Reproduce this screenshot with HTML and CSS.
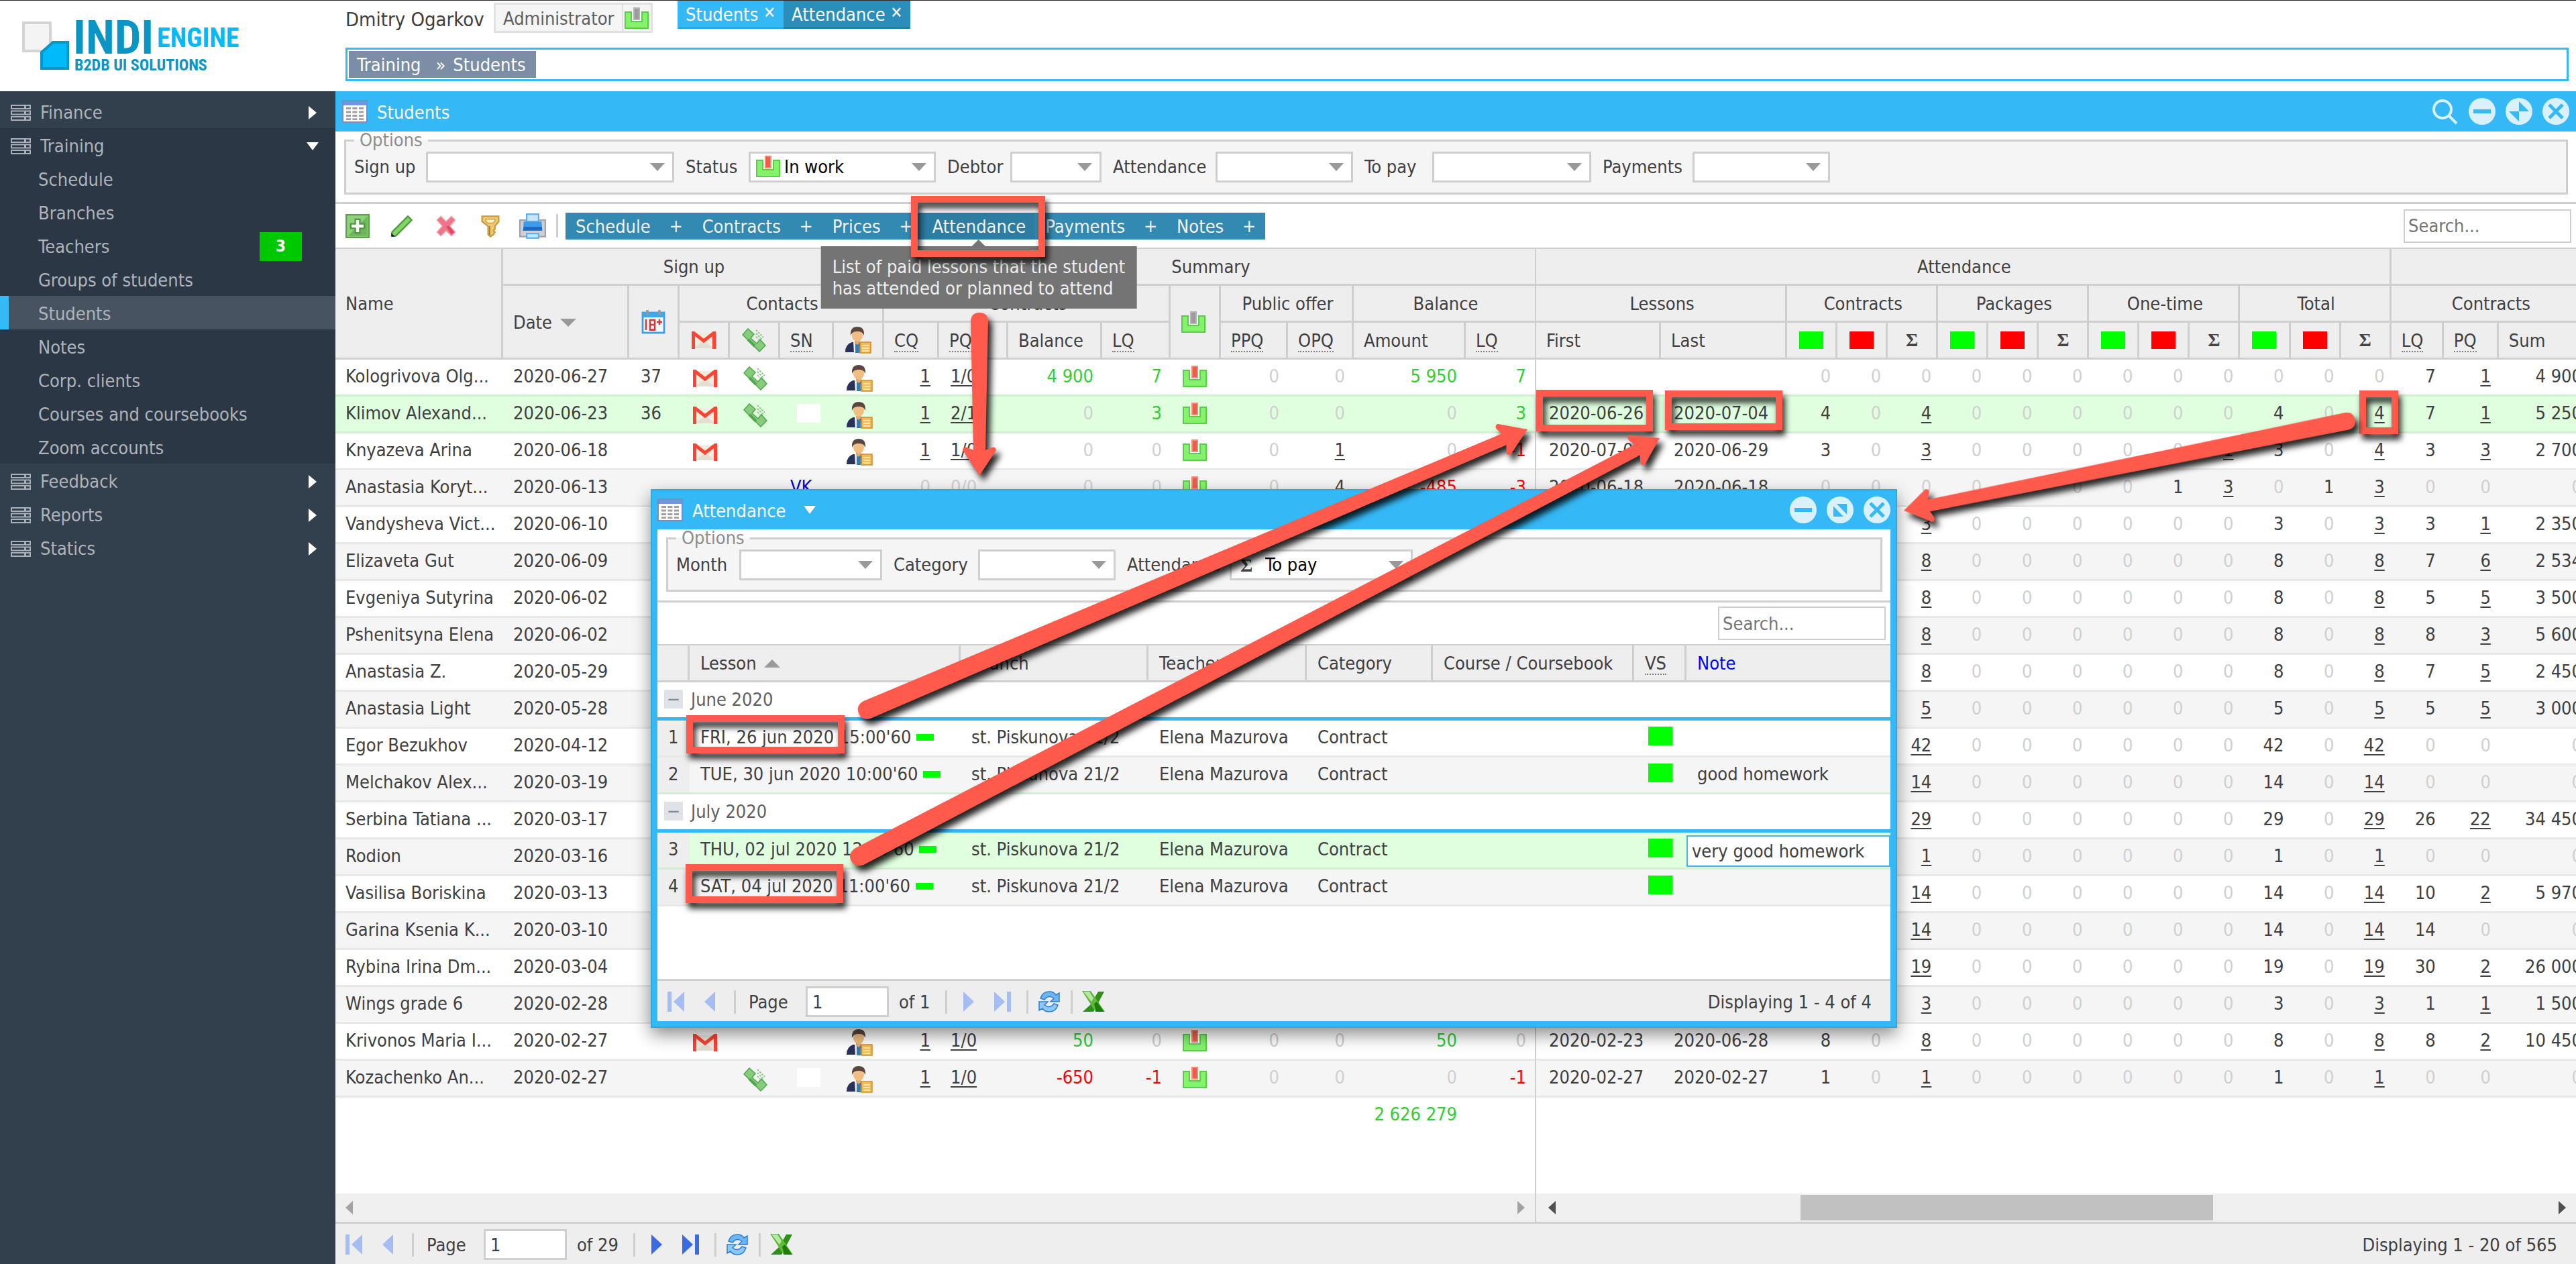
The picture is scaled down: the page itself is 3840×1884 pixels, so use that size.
FILE: index.html
```html
<!DOCTYPE html>
<html lang="en">
<head>
<meta charset="utf-8">
<title>Students - Indi Engine</title>
<link rel="stylesheet" href="styles.css">
</head>
<body>
<svg class="sprite" aria-hidden="true">
  <symbol id="i-status" viewBox="0 0 18 16"><path d="M.5 3.500h4.500v7h8v-7h4.500v12H.5z" fill="#86f26c" stroke="#58cf48"/><path d="M5.500 3.500h7v6.500h-7z" fill="#fff"/><rect x="7" y=".5" width="4" height="8.500" fill="#9b9b9b" stroke="#b5b5b5"/></symbol>
  <symbol id="i-work" viewBox="0 0 18 16"><path d="M.5 3.500h4.500v7h8v-7h4.500v12H.5z" fill="#86f26c" stroke="#58cf48"/><path d="M5.500 3.500h7v6.500h-7z" fill="#fff"/><rect x="7" y=".5" width="4" height="8.500" fill="#e8604c" stroke="#f28c78"/></symbol>
  <symbol id="i-stack" viewBox="0 0 30 24"><g fill="none" stroke="#a9b0b7" stroke-width="2"><rect x="1" y="1" width="28" height="5"/><rect x="1" y="9.500" width="28" height="5"/><rect x="1" y="18" width="28" height="5"/></g><g fill="#a9b0b7"><rect x="20" y="1" width="3" height="5"/><rect x="20" y="10" width="3" height="5"/><rect x="20" y="18" width="3" height="5"/></g></symbol>
  <symbol id="i-grid" viewBox="0 0 19 17"><rect x=".5" y=".5" width="18" height="16" fill="#fff" stroke="#7290c8"/><rect x="1" y="1" width="17" height="3" fill="#6f97dc"/><g fill="#a0a0a0"><path d="M3 5.500h3.500v1.500H3zM7.700 5.500h3.500v1.500H7.700zM12.500 5.500H16v1.500h-3.500zM3 8.200h3.500v1.500H3zM7.700 8.200h3.500v1.500H7.700zM12.500 8.200H16v1.500h-3.500zM3 11h3.500v1.500H3zM7.700 11h3.500v1.500H7.700zM12.500 11H16v1.500h-3.500zM3 13.600h3.500v1.400H3zM7.700 13.600h3.500v1.400H7.700zM12.500 13.600H16v1.400h-3.500z"/></g></symbol>
  <symbol id="i-search" viewBox="0 0 40 40"><circle cx="16" cy="17" r="13" fill="none" stroke="#d8f1fd" stroke-width="4"/><path d="M25 26l12 12" stroke="#d8f1fd" stroke-width="4"/></symbol>
  <symbol id="i-min" viewBox="0 0 40 40"><circle cx="20" cy="20" r="20" fill="#d8f1fd"/><path d="M7 20h26" stroke="#36b9f6" stroke-width="6"/></symbol>
  <symbol id="i-max" viewBox="0 0 40 40"><circle cx="20" cy="20" r="20" fill="#d8f1fd"/><path d="M20 5v30L5 20h30z" fill="#36b9f6"/></symbol>
  <symbol id="i-restore" viewBox="0 0 40 40"><circle cx="20" cy="20" r="20" fill="#d8f1fd"/><path d="M10 11h20v19H10z" fill="#36b9f6"/><path d="M9 9l22 23" stroke="#d8f1fd" stroke-width="6"/></symbol>
  <symbol id="i-close" viewBox="0 0 40 40"><circle cx="20" cy="20" r="20" fill="#d8f1fd"/><path d="M10 10l20 20M30 10L10 30" stroke="#36b9f6" stroke-width="5"/></symbol>
  <symbol id="i-add" viewBox="0 0 16 16"><rect x=".5" y=".5" width="15" height="15" fill="#8fd07c" stroke="#5fa04b"/><path d="M1.500 14.500l13-13v13z" fill="#6fb55c"/><path d="M6.500 3.500h3v3h3v3h-3v3h-3v-3h-3v-3h3z" fill="#fff" stroke="#4d9a3d"/></symbol>
  <symbol id="i-pencil" viewBox="0 0 16 16"><path d="M1.500 12L12 1.500l2.500 2.500L4 14.500H1.500z" fill="#82d667" stroke="#4b9a3c"/><path d="M1 12.500L3.500 15H1z" fill="#123"/></symbol>
  <symbol id="i-del" viewBox="0 0 16 16"><path d="M2 4l2.500-2.500L8 5l3.500-3.500L14 4l-3.500 4L14 12l-2.500 2.500L8 11l-3.500 3.500L2 12l3.500-4z" fill="#ee7488" stroke="#f4a0ae" stroke-width=".7"/><path d="M8 8l3.500 5.500L13.500 12l-3.500-4z" fill="#e04864"/></symbol>
  <symbol id="i-key" viewBox="0 0 16 16"><path d="M2.500 1.500h11v3.500l-2.500 3v2l-1 1 1 1-1 1.500-2 1.500-1.500-1.500V8l-4-3z" fill="#edc974" stroke="#c99a3f"/><path d="M5 3.500h6v1.500l-1.500 1H6.500L5 5z" fill="#fff4c9" stroke="#c99a3f" stroke-width=".6"/><path d="M7.500 8v6" stroke="#a87828" stroke-width=".8"/></symbol>
  <symbol id="i-print" viewBox="0 0 18 17"><path d="M.5 4.500h17v11H.5z" fill="#cfcfd6" stroke="#a3a3ad"/><rect x="5" y=".5" width="8" height="5" fill="#c9e4ff" stroke="#5cb0f5"/><path d="M3 5.500h12l.5 6h-13z" fill="#3f9be8"/><path d="M3 9h12.300v2.500H2.500z" fill="#1d6cc4"/><rect x="5" y="13.500" width="8" height="3" fill="#c9e4ff" stroke="#5cb0f5"/></symbol>
  <symbol id="i-cal" viewBox="0 0 18 18"><rect x="1" y="2" width="16" height="15" fill="#f4fbfd" stroke="#3f9fe4" stroke-width="1.400"/><path d="M1 2h16v3.500H1z" fill="#3ea8ee"/><path d="M4.500 0v4M13.500 0v4" stroke="#999" stroke-width="1.800"/><path d="M3.500 7v8M6.500 7.500h3.500v7.300H6.500zM6.500 11h3.500M11.500 9h4M13.500 7v4" fill="none" stroke="#d23b3b" stroke-width="1.300"/></symbol>
  <symbol id="i-mail" viewBox="0 0 36 26"><path d="M3 2h30v23H3z" fill="#efece0"/><path d="M3 25l15-11 15 11z" fill="#e2ded2"/><path d="M2.500 26V2L18 14 33.500 2v24" fill="none" stroke="#fb4433" stroke-width="5"/></symbol>
  <symbol id="i-phone" viewBox="0 0 36 36"><path d="M1 10l8-9 9 8-5 6 9 8 5-6 8 9-9 9z" fill="#86cb7e" stroke="#4da94b" stroke-width="1.500"/><path d="M9 17l10 10" stroke="#4da94b" stroke-width="4"/><path d="M21 3l11 11M21 8l9 9M21 13l4 4" fill="none" stroke="#8fc98a" stroke-width="2" stroke-dasharray="3 1.500"/></symbol>
  <symbol id="i-man" viewBox="0 0 40 40"><path d="M1 38q0-12 10-15h9q6 1 8 6v9z" fill="#29305a"/><path d="M13 22h8l1 17h-8z" fill="#eef3f8"/><path d="M16 24h5l1 15h-6z" fill="#2f7fb5"/><path d="M15 16h8v8l-4 3-4-3z" fill="#e0a86c"/><ellipse cx="19" cy="13" rx="8" ry="9" fill="#f0bd83"/><path d="M9 13Q8 0 19 0t10 13q-3-7-10-6Q12 6 9 13z" fill="#59463f"/><rect x="23" y="23" width="16" height="16" fill="#f6ba55" stroke="#d08d2c" stroke-width="1.500"/><path d="M26 28h10M26 32h10M26 36h10" stroke="#fde7ae" stroke-width="2"/></symbol>
  <symbol id="i-first" viewBox="0 0 28 32"><rect x="1" y="1" width="6" height="30"/><path d="M26 1v30L10 16z"/></symbol>
  <symbol id="i-prev" viewBox="0 0 28 32"><path d="M22 1v30L6 16z"/></symbol>
  <symbol id="i-next" viewBox="0 0 28 32"><path d="M6 1v30l16-15z"/></symbol>
  <symbol id="i-last" viewBox="0 0 28 32"><rect x="21" y="1" width="6" height="30"/><path d="M2 1v30l16-15z"/></symbol>
  <symbol id="i-refresh" viewBox="0 0 36 36"><path d="M5 13Q8 3 18 3q7 0 10 5l5-3v13H20l5-5q-8-6-14 2z" fill="#6db5f2" stroke="#2d7fd1" stroke-width="1.500"/><path d="M31 23q-3 10-13 10-7 0-10-5l-5 3V18h13l-5 5q8 6 14-2z" fill="#8cc8f7" stroke="#2d7fd1" stroke-width="1.500"/></symbol>
  <symbol id="i-excel" viewBox="0 0 36 36"><path d="M14 22L25 3h9L18 33H2z" fill="#2f8f16"/><path d="M1 2h13l21 31H21z" fill="#5dbb3c"/><path d="M3 3h9l6 10-3 5z" fill="#b6e8a2"/><path d="M19 21l4-3 11 15H22z" fill="#1f7c0c"/></symbol>
</svg>

<header class="top">
  <a class="logo" href="#" aria-label="Indi Engine">
    <svg width="340" height="100" viewBox="0 0 340 100">
      <path d="M2 16h40v42H2z" fill="#f4f4f4" stroke="#d4d4d4" stroke-width="4"/>
      <path d="M46 45h22v39H29V60z" fill="#00baf9" stroke="#0497c8" stroke-width="4"/>
      <text class="logo-big" x="76" y="62">INDI</text>
      <text class="logo-mid" x="201" y="52">ENGINE</text>
      <text class="logo-sub" x="78" y="87">B2DB UI SOLUTIONS</text>
    </svg>
  </a>
  <div class="top-main">
    <div class="user-row">
      <span class="user">Dmitry Ogarkov</span>
      <span class="role"><span class="role-name">Administrator</span><svg class="tray"><use href="#i-status"/></svg></span>
      <nav class="tabs">
        <button class="tab on">Students <span class="x">✕</span></button><button class="tab">Attendance <span class="x">✕</span></button>
      </nav>
    </div>
    <div class="crumbs"><div class="crumb-chip"><a href="#">Training</a><span>»</span><a href="#">Students</a></div></div>
  </div>
</header>

<div class="shell">
  <nav class="side">
    <a class="root" href="#"><svg class="stack"><use href="#i-stack"/></svg>Finance<i class="tri-r"></i></a>
    <div class="open">
      <a class="root" href="#"><svg class="stack"><use href="#i-stack"/></svg>Training<i class="tri-d"></i></a>
      <a class="leaf" href="#">Schedule</a>
      <a class="leaf" href="#">Branches</a>
      <a class="leaf" href="#">Teachers<b class="count">3</b></a>
      <a class="leaf" href="#">Groups of students</a>
      <a class="leaf current" href="#">Students</a>
      <a class="leaf" href="#">Notes</a>
      <a class="leaf" href="#">Corp. clients</a>
      <a class="leaf" href="#">Courses and coursebooks</a>
      <a class="leaf" href="#">Zoom accounts</a>
    </div>
    <a class="root" href="#"><svg class="stack"><use href="#i-stack"/></svg>Feedback<i class="tri-r"></i></a>
    <a class="root" href="#"><svg class="stack"><use href="#i-stack"/></svg>Reports<i class="tri-r"></i></a>
    <a class="root" href="#"><svg class="stack"><use href="#i-stack"/></svg>Statics<i class="tri-r"></i></a>
  </nav>

  <main class="panel">
    <div class="bar">
      <svg class="grid-ico"><use href="#i-grid"/></svg><h1>Students</h1>
      <div class="tools">
        <button aria-label="Search"><svg><use href="#i-search"/></svg></button>
        <button aria-label="Minimize"><svg><use href="#i-min"/></svg></button>
        <button aria-label="Maximize"><svg><use href="#i-max"/></svg></button>
        <button aria-label="Close"><svg><use href="#i-close"/></svg></button>
      </div>
    </div>
    <div class="filters">
      <fieldset>
        <legend>Options</legend>
        <div class="fields">
          <label for="f1" class="l-107">Sign up</label><select id="f1" class="w-370"><option></option></select>
          <label for="f2" class="l-94">Status</label><span class="pick"><svg class="tray"><use href="#i-work"/></svg><select id="f2" class="w-280"><option>In work</option></select></span>
          <label for="f3" class="l-94">Debtor</label><select id="f3" class="w-136"><option></option></select>
          <label for="f4" class="l-153">Attendance</label><select id="f4" class="w-204"><option></option></select>
          <label for="f5" class="l-101">To pay</label><select id="f5" class="w-237"><option></option></select>
          <label for="f6" class="l-134">Payments</label><select id="f6" class="w-204"><option></option></select>
        </div>
      </fieldset>
    </div>
    <div class="toolbar">
      <button class="act" aria-label="Create"><svg><use href="#i-add"/></svg></button>
      <button class="act" aria-label="Edit"><svg><use href="#i-pencil"/></svg></button>
      <button class="act" aria-label="Delete"><svg><use href="#i-del"/></svg></button>
      <button class="act" aria-label="Access"><svg><use href="#i-key"/></svg></button>
      <button class="act print" aria-label="Print"><svg><use href="#i-print"/></svg></button>
      <i class="sep"></i>
      <div class="subs">
        <button>Schedule</button><button class="plus">+</button><button>Contracts</button><button class="plus">+</button><button>Prices</button><button class="plus">+</button><span class="hint"><button class="hot" aria-describedby="tip">Attendance</button><span class="tip" id="tip" role="tooltip">List of paid lessons that the student<br>has attended or planned to attend</span></span><button>Payments</button><button class="plus">+</button><button>Notes</button><button class="plus">+</button>
      </div>
      <input class="find" type="text" placeholder="Search..." aria-label="Search">
    </div>

    <div class="grids">
      <div class="locked">
        <table class="grid">
          <colgroup><col class="c250"><col class="c188"><col class="c75"><col class="c75"><col class="c75"><col class="c80"><col class="c75"><col class="c82"><col class="c103"><col class="c140"><col class="c102"><col class="c75"><col class="c100"><col class="c98"><col class="c167"><col class="c103"></colgroup>
          <thead>
            <tr><th rowspan="3">Name</th><th colspan="6" class="mid">Sign up</th><th colspan="9" class="mid">Summary</th></tr>
            <tr><th rowspan="2">Date <i class="sort-d"></i></th><th rowspan="2" class="mid"><svg class="ico"><use href="#i-cal"/></svg></th><th colspan="4" class="mid">Contacts</th><th colspan="4" class="mid">Contracts</th><th rowspan="2" class="mid"><svg class="tray"><use href="#i-status"/></svg></th><th colspan="2" class="mid">Public offer</th><th colspan="2" class="mid">Balance</th></tr>
            <tr><th class="mid"><svg class="mail"><use href="#i-mail"/></svg></th><th class="mid"><svg class="ico"><use href="#i-phone"/></svg></th><th><abbr>SN</abbr></th><th class="mid"><svg class="man"><use href="#i-man"/></svg></th><th><abbr>CQ</abbr></th><th><abbr>PQ</abbr></th><th>Balance</th><th><abbr>LQ</abbr></th><th><abbr>PPQ</abbr></th><th><abbr>OPQ</abbr></th><th>Amount</th><th><abbr>LQ</abbr></th></tr>
          </thead>
          <tbody id="left"></tbody>
        </table>
        <div class="scroll off"><i class="al"></i><i class="ar"></i></div>
      </div>
      <div class="free">
        <div class="clip">
        <table class="grid wide">
          <colgroup><col class="c186"><col class="c188"><col class="c75" span="12"><col class="c78"><col class="c82"><col class="c136"></colgroup>
          <thead>
            <tr><th colspan="14" class="mid">Attendance</th><th colspan="3"></th></tr>
            <tr><th colspan="2" class="mid">Lessons</th><th colspan="3" class="mid">Contracts</th><th colspan="3" class="mid">Packages</th><th colspan="3" class="mid">One-time</th><th colspan="3" class="mid">Total</th><th colspan="3" class="mid">Contracts</th></tr>
            <tr><th>First</th><th>Last</th><th class="mid"><i class="sq g"></i></th><th class="mid"><i class="sq r"></i></th><th class="mid sum">Σ</th><th class="mid"><i class="sq g"></i></th><th class="mid"><i class="sq r"></i></th><th class="mid sum">Σ</th><th class="mid"><i class="sq g"></i></th><th class="mid"><i class="sq r"></i></th><th class="mid sum">Σ</th><th class="mid"><i class="sq g"></i></th><th class="mid"><i class="sq r"></i></th><th class="mid sum">Σ</th><th><abbr>LQ</abbr></th><th><abbr>PQ</abbr></th><th>Sum</th></tr>
          </thead>
          <tbody id="right"></tbody>
        </table>
        </div>
        <div class="scroll"><i class="al"></i><i class="thumb"></i><i class="ar"></i></div>
      </div>
    </div>

    <div class="pager">
      <button class="dim" aria-label="First page"><svg><use href="#i-first"/></svg></button>
      <button class="dim" aria-label="Previous page"><svg><use href="#i-prev"/></svg></button>
      <i class="sep"></i>
      <label for="pg">Page</label><input id="pg" type="text" value="1"><span>of 29</span>
      <i class="sep"></i>
      <button aria-label="Next page"><svg><use href="#i-next"/></svg></button>
      <button aria-label="Last page"><svg><use href="#i-last"/></svg></button>
      <i class="sep"></i>
      <button class="sq-btn" aria-label="Refresh"><svg><use href="#i-refresh"/></svg></button>
      <i class="sep"></i>
      <button class="sq-btn" aria-label="Export to Excel"><svg><use href="#i-excel"/></svg></button>
      <span class="total">Displaying 1 - 20 of 565</span>
    </div>
  </main>
</div>

<section class="win" aria-label="Attendance">
  <div class="bar">
    <svg class="grid-ico"><use href="#i-grid"/></svg><h2>Attendance</h2><i class="tri-d"></i>
    <div class="tools">
      <button aria-label="Minimize window"><svg><use href="#i-min"/></svg></button>
      <button aria-label="Restore window"><svg><use href="#i-restore"/></svg></button>
      <button aria-label="Close window"><svg><use href="#i-close"/></svg></button>
    </div>
  </div>
  <div class="filters">
    <fieldset>
      <legend>Options</legend>
      <div class="fields">
        <label for="w1" class="l-94">Month</label><select id="w1" class="w-213"><option></option></select>
        <label for="w2" class="l-126">Category</label><select id="w2" class="w-204"><option></option></select>
        <label for="w3" class="l-153">Attendance</label><span class="pick"><b class="sum">Σ</b><select id="w3" class="w-273"><option>To pay</option></select></span>
      </div>
    </fieldset>
  </div>
  <div class="toolbar"><input class="find" type="text" placeholder="Search..." aria-label="Search lessons"></div>
  <div class="win-body">
  <table class="grid lessons">
    <colgroup><col class="c48"><col class="c404"><col class="c280"><col class="c236"><col class="c188"><col class="c300"><col class="c78"><col></colgroup>
    <thead><tr><th></th><th>Lesson <i class="sort-u"></i></th><th>Branch</th><th>Teacher</th><th>Category</th><th>Course / Coursebook</th><th><abbr>VS</abbr></th><th class="blue">Note</th></tr></thead>
    <tbody>
      <tr class="group"><td colspan="8"><button class="fold" aria-label="Collapse June 2020">−</button>June 2020</td></tr>
      <tr><td class="n">1</td><td>FRI, 26 jun 2020 15:00'60 <i class="dash"></i></td><td>st. Piskunova 21/2</td><td>Elena Mazurova</td><td>Contract</td><td></td><td class="mid"><i class="sq g"></i></td><td></td></tr>
      <tr class="alt last"><td class="n">2</td><td>TUE, 30 jun 2020 10:00'60 <i class="dash"></i></td><td>st. Piskunova 21/2</td><td>Elena Mazurova</td><td>Contract</td><td></td><td class="mid"><i class="sq g"></i></td><td>good homework</td></tr>
      <tr class="group"><td colspan="8"><button class="fold" aria-label="Collapse July 2020">−</button>July 2020</td></tr>
      <tr class="sel"><td class="n">3</td><td>THU, 02 jul 2020 12:00'60 <i class="dash"></i></td><td>st. Piskunova 21/2</td><td>Elena Mazurova</td><td>Contract</td><td></td><td class="mid"><i class="sq g"></i></td><td class="edit"><input type="text" value="very good homework" aria-label="Note" autofocus></td></tr>
      <tr class="alt"><td class="n">4</td><td>SAT, 04 jul 2020 11:00'60 <i class="dash"></i></td><td>st. Piskunova 21/2</td><td>Elena Mazurova</td><td>Contract</td><td></td><td class="mid"><i class="sq g"></i></td><td></td></tr>
    </tbody>
  </table>
  </div>
  <div class="pager">
    <button class="dim" aria-label="First page of lessons"><svg><use href="#i-first"/></svg></button>
    <button class="dim" aria-label="Previous page of lessons"><svg><use href="#i-prev"/></svg></button>
    <i class="sep"></i>
    <label for="wpg">Page</label><input id="wpg" type="text" value="1"><span>of 1</span>
    <i class="sep"></i>
    <button class="dim" aria-label="Next page of lessons"><svg><use href="#i-next"/></svg></button>
    <button class="dim" aria-label="Last page of lessons"><svg><use href="#i-last"/></svg></button>
    <i class="sep"></i>
    <button class="sq-btn" aria-label="Refresh lessons"><svg><use href="#i-refresh"/></svg></button>
    <i class="sep"></i>
    <button class="sq-btn" aria-label="Export lessons to Excel"><svg><use href="#i-excel"/></svg></button>
    <span class="total">Displaying 1 - 4 of 4</span>
  </div>
</section>

<!-- callouts drawn over the page -->
<svg class="marks" width="3840" height="1884" viewBox="0 0 3840 1884" aria-hidden="true">
  <g class="frames">
    <rect x="1363" y="297" width="190" height="81"/>
    <rect x="2295" y="586" width="164" height="52"/>
    <rect x="2487" y="587" width="165" height="49"/>
    <rect x="3522" y="587" width="48" height="55"/>
    <rect x="1028" y="1071" width="226" height="47"/>
    <rect x="1027" y="1293" width="225" height="48"/>
  </g>
  <g class="arrows">
    <path transform="translate(1460 709) rotate(90)" d="M0 0L-38 25Q-44 24-42 18L-38 9L-231 13Q-243 12-243 0Q-243-12-231-13L-38-9L-42-18Q-44-24-38-25Z"/>
    <path transform="translate(2277 640) rotate(-23)" d="M0 0L-38 25Q-44 24-42 18L-38 9L-1070 14Q-1083 12-1083 0Q-1083-12-1070-14L-38-9L-42-18Q-44-24-38-25Z"/>
    <path transform="translate(2474 653) rotate(-27.600)" d="M0 0L-38 25Q-44 24-42 18L-38 9L-1346 14Q-1360 12-1360 0Q-1360-12-1346-14L-38-9L-42-18Q-44-24-38-25Z"/>
    <path transform="translate(2838 761) rotate(168.600)" d="M0 0L-38 25Q-44 24-42 18L-38 9L-674 13Q-686 12-686 0Q-686-12-674-13L-38-9L-42-18Q-44-24-38-25Z"/>
  </g>
</svg>
<script src="grid.js"></script>
</body>
</html>
```
FILE: grid.js
```js
// name | date | age | icons (m mail, p phone, w blank network, v VK, u manager) | locked numbers | first | last | scrolling numbers
const rows = [
  ["Kologrivova Olg...", "2020-06-27", "37", "mpu", "_1,_1/0,+4 900,+7,*,0,0,+5 950,+7", "", "", "0,0,0,0,0,0,0,0,0,0,0,0,7,_1,4 900"],
  ["Klimov Alexand...", "2020-06-23", "36", "mpwu", "_1,_2/1,0,+3,*,0,0,0,+3", "2020-06-26", "2020-07-04", "4,0,_4,0,0,0,0,0,0,4,0,_4,7,_1,5 250"],
  ["Knyazeva Arina", "2020-06-18", "", "mu", "_1,_1/0,0,0,*,0,_1,0,--1", "2020-07-02", "2020-06-29", "3,0,_3,0,0,0,0,0,_1,3,0,_4,3,_3,2 700"],
  ["Anastasia Koryt...", "2020-06-13", "", "v", "0,~0/0,0,0,*,0,4,--485,--3", "2020-06-18", "2020-06-18", "0,0,0,0,0,0,0,1,_3,0,1,_3,0,0,0"],
  ["Vandysheva Vict...", "2020-06-10", "", "", "", "", "", ",,_3,0,0,0,0,0,0,3,0,_3,3,_1,2 350"],
  ["Elizaveta Gut", "2020-06-09", "", "", "", "", "", ",,_8,0,0,0,0,0,0,8,0,_8,7,_6,2 534"],
  ["Evgeniya Sutyrina", "2020-06-02", "", "", "", "", "", ",,_8,0,0,0,0,0,0,8,0,_8,5,_5,3 500"],
  ["Pshenitsyna Elena", "2020-06-02", "", "", "", "", "", ",,_8,0,0,0,0,0,0,8,0,_8,8,_3,5 600"],
  ["Anastasia Z.", "2020-05-29", "", "", "", "", "", ",,_8,0,0,0,0,0,0,8,0,_8,7,_5,2 450"],
  ["Anastasia Light", "2020-05-28", "", "", "", "", "", ",,_5,0,0,0,0,0,0,5,0,_5,5,_5,3 000"],
  ["Egor Bezukhov", "2020-04-12", "", "", "", "", "", ",,_42,0,0,0,0,0,0,42,0,_42,0,0,0"],
  ["Melchakov Alex...", "2020-03-19", "", "", "", "", "", ",,_14,0,0,0,0,0,0,14,0,_14,0,0,0"],
  ["Serbina Tatiana ...", "2020-03-17", "", "", "", "", "", ",,_29,0,0,0,0,0,0,29,0,_29,26,_22,34 450"],
  ["Rodion", "2020-03-16", "", "", "", "", "", ",,_1,0,0,0,0,0,0,1,0,_1,0,0,0"],
  ["Vasilisa Boriskina", "2020-03-13", "", "", "", "", "", ",,_14,0,0,0,0,0,0,14,0,_14,10,_2,5 970"],
  ["Garina Ksenia K...", "2020-03-10", "", "", "", "", "", ",,_14,0,0,0,0,0,0,14,0,_14,14,0,0"],
  ["Rybina Irina Dm...", "2020-03-04", "", "", "", "", "", ",,_19,0,0,0,0,0,0,19,0,_19,30,_2,26 000"],
  ["Wings grade 6", "2020-02-28", "", "", "", "", "", ",,_3,0,0,0,0,0,0,3,0,_3,1,_1,1 500"],
  ["Krivonos Maria I...", "2020-02-27", "", "mu", "_1,_1/0,+50,0,*,0,0,+50,0", "2020-02-23", "2020-06-28", "8,0,_8,0,0,0,0,0,0,8,0,_8,8,_2,10 450"],
  ["Kozachenko An...", "2020-02-27", "", "pwu", "_1,_1/0,--650,--1,*,0,0,0,--1", "2020-02-27", "2020-02-27", "1,0,_1,0,0,0,0,0,0,1,0,_1,0,0,0"]
];

const icon = (id, cls) => `<svg class="${cls}"><use href="#i-${id}"/></svg>`;

// prefix of a value: _ link, + positive, - negative, ~ muted, * status icon
function cell(v) {
  if (v === "*") return `<td class="mid">${icon("work", "tray")}</td>`;
  if (v === "0") return '<td class="num zero">0</td>';
  const kind = { _: "link", "+": "pos", "-": "neg", "~": "zero" }[v[0]];
  if (!kind) return `<td class="num">${v}</td>`;
  const text = v.slice(1);
  const side = text.includes("/") ? "pair" : "num";
  return kind === "link" ? `<td class="${side}"><a href="#">${text}</a></td>` : `<td class="${side} ${kind}">${text}</td>`;
}

let left = "", right = "";
rows.forEach((r, i) => {
  const [name, date, age, icons, nums, first, last, att] = r;
  const cls = i === 1 ? "sel" : i === 0 ? "before" : i % 2 ? "alt" : "";
  const has = k => icons.includes(k);
  left += `<tr class="${cls}"><td>${name}</td><td>${date}</td><td class="age">${age}</td>` +
    `<td class="mid">${has("m") ? icon("mail", "mail") : ""}</td><td class="mid">${has("p") ? icon("phone", "ico") : ""}</td>` +
    `<td>${has("w") ? '<i class="blank"></i>' : has("v") ? '<a class="vk" href="#">VK</a>' : ""}</td>` +
    `<td class="mid">${has("u") ? icon("man", "man") : ""}</td>` +
    (nums ? nums.split(",").map(cell).join("") : "<td></td>".repeat(9)) + "</tr>";
  right += `<tr class="${cls}"><td>${first}</td><td>${last}</td>${att.split(",").map(cell).join("")}</tr>`;
});
left += `<tr class="foot"><td colspan="14"></td><td class="num pos">2 626 279</td><td></td></tr>`;
document.getElementById("left").innerHTML = left;
document.getElementById("right").innerHTML = right;

const note = document.querySelector(".edit input");
note.focus();
note.setSelectionRange(note.value.length, note.value.length);
```
FILE: styles.css
```css
* { box-sizing: border-box; }
body, button, input, select { font: 27px/32px "DejaVu Sans Condensed", "DejaVu Sans", Tahoma, sans-serif; color: #404040; }
body { margin: 0; min-height: 100vh; display: flex; flex-direction: column; background: #fff; overflow: hidden; position: relative; }
button { border: 0; padding: 0; background: none; cursor: pointer; }
a { color: inherit; text-decoration: none; }
svg { display: block; }
.sprite { position: absolute; width: 0; height: 0; }
.ico { width: 36px; height: 36px; }
.tray { width: 36px; height: 32px; }

/* top */
.top { display: grid; grid-template-columns: 500px 1fr; height: 136px; border-top: 1px solid #2b2b2b; }
.logo { padding: 17px 0 0 33px; }
.logo text { font-family: "Liberation Sans Narrow", "Roboto Condensed", "DejaVu Sans Condensed", sans-serif; font-weight: bold; fill: #0a95c5; }
.logo .logo-big { font-size: 70px; }
.logo .logo-mid { font-size: 40px; fill: #00baf9; }
.logo .logo-sub { font-size: 24px; }
.top-main { padding: 0 11px 0 15px; display: flex; flex-direction: column; gap: 22px; }
.user-row { display: flex; height: 48px; align-items: flex-start; }
.user { line-height: 56px; width: 221px; font-size: 29px; white-space: nowrap; }
.role { display: flex; align-items: center; height: 45px; margin-top: 3px; border: 3px solid #e1e1e1; background: #f5f5f5; color: #606060; }
.role-name { width: 190px; padding: 2px 0 0 11px; line-height: 40px; border-right: 2px solid #e1e1e1; }
.role .tray { margin: 0 3px 0 2px; }
.tabs { display: flex; margin-left: 37px; }
.tab { height: 42px; padding: 2px 12px 0; background: #2a8dba; color: #fff; border-bottom: 3px solid #2680a9; text-align: left; white-space: nowrap; }
.tab.on { background: #35b9f6; border-color: #30a7de; }
.tab .x { font-size: 24px; line-height: 24px; vertical-align: 4px; }
.crumbs { height: 50px; border: 3px solid #35baf6; padding: 2px; }
.crumb-chip { display: inline-flex; gap: 22px; height: 40px; padding: 0 15px 0 12px; line-height: 42px; background: #7c8ea6; color: #fff; }
.crumb-chip span { margin-right: -11px; }

/* sidebar */
.shell { flex: 1; display: grid; grid-template-columns: 500px 1fr; min-height: 0; }
.side { background: #323f4c; padding-top: 5px; color: #aeb4ba; }
.open { background: #2c3745; }
.side a { display: flex; align-items: center; height: 50px; padding-top: 3px; }
.stack { width: 30px; height: 24px; margin-right: 14px; }
.root { padding: 0 28px 0 16px; }
.leaf { padding: 0 50px 0 57px; }
.leaf.current { background: #485361; border-left: 13px solid #35baf6; padding-left: 44px; }
.tri-r { margin-left: auto; border: 10px solid transparent; border-left: 12px solid #fff; border-right: 0; }
.tri-d { border: 9px solid transparent; border-top: 12px solid #fff; border-bottom: 0; }
.root .tri-d { margin: 0 -3px 0 auto; }
.count { margin-left: auto; width: 63px; line-height: 43px; text-align: center; background: #00c800; color: #fff; font-size: 24px; }

/* panels */
.panel { display: flex; flex-direction: column; min-width: 0; }
.bar { display: flex; align-items: center; height: 60px; padding: 0 10px; background: #35b9f6; color: #fff; }
.bar h1, .bar h2 { margin: 0 0 0 14px; padding-top: 3px; font-size: 27px; font-weight: normal; }
.grid-ico { width: 38px; height: 34px; }
.tools { margin-left: auto; display: flex; gap: 15px; }
.tools svg { width: 40px; height: 40px; }
.filters { padding: 0 12px 11px 13px; border-bottom: 3px solid #cfcfcf; }
fieldset { margin: 0; padding: 4px 12px 15px; border: 3px solid #cfcfcf; background: #f5f5f5; min-width: 0; }
legend { padding: 0 8px; line-height: 26px; color: #8e8e8e; }
.fields { display: flex; align-items: center; }
.fields label { margin-left: 17px; white-space: nowrap; }
.fields label:first-child { margin-left: 0; }
.l-94 { width: 94px; } .l-101 { width: 101px; } .l-107 { width: 107px; } .l-126 { width: 126px; } .l-134 { width: 134px; } .l-153 { width: 153px; }
select { appearance: none; height: 46px; border: 3px solid #cfcfcf; padding: 0 45px 0 12px; color: #000; border-radius: 0;
  background: #fff url("data:image/svg+xml,%3Csvg xmlns='http://www.w3.org/2000/svg' width='22' height='12'%3E%3Cpath d='M0 0h22L11 12z' fill='%23999'/%3E%3C/svg%3E") no-repeat right 11px center; }
.pick { position: relative; }
.pick select { display: block; padding-left: 50px; }
.pick .tray, .pick .sum { position: absolute; left: 11px; top: 6px; }
.pick .sum { left: 16px; }
.w-136 { width: 136px; } .w-204 { width: 205px; } .w-213 { width: 213px; } .w-237 { width: 237px; } .w-273 { width: 273px; } .w-280 { width: 279px; } .w-370 { width: 370px; }

.toolbar { display: flex; align-items: center; height: 65px; padding: 0 7px 0 12px; }
.act { display: flex; justify-content: center; width: 42px; margin-right: 24px; }
.act svg { width: 36px; height: 36px; }
.act.print { margin: 0 14px 0 -3px; }
.act.print svg { width: 40px; height: 38px; }
.sep { width: 3px; height: 35px; background: #cfcfcf; }
.subs { display: flex; margin-left: 11px; height: 40px; background: #328ab2; }
.subs button { color: #f2f2f2; height: 40px; padding: 2px 14px 0 15px; white-space: nowrap; }
.subs .plus { width: 48px; padding: 0; text-align: center; }
.subs .hot { background: #2d7ca1; }
.hint { position: relative; }
.tip { position: absolute; top: 50px; left: 50%; transform: translateX(-50%); padding: 15px 17px; line-height: 32px; height: 93px; background: #747474; color: #eee; white-space: nowrap; z-index: 2; }
.tip::before { content: ""; position: absolute; left: 50%; top: -10px; margin-left: -10px; border: 10px solid transparent; border-top: 0; border-bottom-color: #747474; }
.find { margin-left: auto; width: 250px; height: 50px; padding: 0 5px; border: 2px solid #cfcfcf; }
.find::placeholder { color: #757575; opacity: 1; }

/* grids */
.grids { flex: 1; display: flex; min-height: 0; }
.locked { width: 1790px; flex: none; border-right: 2px solid #cfcfcf; display: flex; flex-direction: column; }
.free { flex: 1; min-width: 0; display: flex; flex-direction: column; }
.clip { overflow: hidden; }
.grid { width: 100%; table-layout: fixed; border-collapse: separate; border-spacing: 0; border-top: 2px solid #cfcfcf; }
.grid.wide { width: 1571px; }
.c48 { width: 48px; } .c75 { width: 75px; } .c78 { width: 78px; } .c80 { width: 80px; } .c82 { width: 82px; } .c98 { width: 98px; } .c100 { width: 100px; }
.c102 { width: 102px; } .c103 { width: 103px; } .c136 { width: 136px; } .c140 { width: 140px; } .c167 { width: 167px; } .c186 { width: 186px; }
.c188 { width: 188px; } .c236 { width: 236px; } .c250 { width: 250px; } .c280 { width: 280px; } .c300 { width: 300px; } .c404 { width: 404px; }
th { height: 55px; padding: 2px 0 0 15px; font-weight: normal; text-align: left; white-space: nowrap; overflow: hidden; background: #eee; border: 0 solid #cfcfcf; border-width: 0 3px 3px 0; }
.locked tr:first-child th:last-child, .locked th:last-child { border-right-width: 0; }
th.mid { padding: 0; text-align: center; }
th.mid[colspan] { padding: 2px 0 0 4px; }
.mid svg, .mid .sq { display: block; margin: 0 auto; }
.mail { width: 36px; height: 26px; }
.man { width: 40px; height: 40px; }
abbr { text-decoration: none; border-bottom: 2px dotted #808080; }
.sort-d, .sort-u { display: inline-block; margin-left: 4px; vertical-align: 3px; border: 12px solid transparent; border-top: 12px solid #999; border-bottom: 0; }
.sort-u { border: 12px solid transparent; border-bottom: 12px solid #999; border-top: 0; }
.sq { width: 36px; height: 26px; }
.sq.g { background: #0f0; } .sq.r { background: #f00; }
.sum { font: bold 28px/36px "Liberation Serif", serif; color: #444; }

td { height: 55px; padding: 0 0 0 15px; line-height: 50px; vertical-align: top; white-space: nowrap; overflow: hidden; border-bottom: 3px solid #e8e8e8; }
.mid svg { position: relative; }
td .mail { top: 15px; }
td .ico { top: 10px; }
td .man { top: 8px; }
.mid .tray { left: -2px; }
td .tray { top: 9px; }
td.mid { padding: 0; }
.age { padding-left: 17px; }
.num { padding: 0 13px 0 0; text-align: right; }
.pair { padding-left: 17px; }
.free .num { padding-right: 10px; }
.free td:nth-child(n+15) { padding-right: 12px; }
.free td:nth-child(-n+2) { padding-left: 19px; }
.num a, .pair a { text-decoration: underline; text-underline-offset: 4px; text-decoration-thickness: 2px; }
.zero { color: #d0d0d0; } .pos { color: #32cd32; } .neg { color: #f00; }
.blank { display: block; width: 35px; height: 28px; margin: 11px 0 0 10px; background: #fff; }
.vk { color: #0000e0; }
.alt td { background: #f5f5f5; }
.sel td { background: #dfffdf; }
.sel td, .before td { border-bottom-color: #d2f0d2; }
.foot td { border: 0; }
.scroll { display: flex; align-items: center; height: 42px; margin-top: auto; padding: 0 15px; background: #f0f0f0; color: #505050; }
.scroll.off { color: #a3a3a3; }
.free .scroll { padding-left: 18px; }
.al, .ar { border: 10px solid transparent; border-right: 11px solid; border-left: 0; }
.al { border-right-color: currentColor; }
.ar { margin-left: auto; border-left: 11px solid; border-right: 0; }
.scroll .thumb { width: 615px; height: 38px; margin-left: 365px; background: #c1c1c1; }
.scroll i { border-top-color: transparent; border-bottom-color: transparent; }

/* paging bars */
.pager { display: flex; align-items: center; height: 63px; padding: 2px 28px 0 14px; border-top: 3px solid #cfcfcf; background: #eee; }
.pager button svg { width: 28px; height: 32px; fill: #3a6be0; }
.pager button { margin-right: 22px; }
.pager .dim svg { fill: #a6bdf3; }
.pager .sep { margin-right: 18px; }
.pager label { width: 86px; padding: 1px 0 0 1px; }
.pager input { width: 124px; height: 46px; margin-right: 15px; padding: 0 7px; border: 3px solid #cfcfcf; }
.pager span { margin-right: 22px; padding-top: 1px; }
.pager .sq-btn { margin: 0 14px 0 -5px; }
.pager .sq-btn svg { width: 36px; height: 36px; }
.pager .total { margin: 0 0 0 auto; }

/* lessons window */
.win { position: absolute; left: 970px; top: 729px; width: 1858px; display: flex; flex-direction: column; background: #fff; border: 2px solid #2fa8e0; box-shadow: 0 10px 24px rgba(0, 0, 0, .45); }
.win::before { content: ""; position: absolute; inset: 0; border: solid #35b9f6; border-width: 0 8px 8px; pointer-events: none; z-index: 1; }
.win > * { margin: 0 8px; }
.win > .bar { height: 58px; margin: 0; padding: 0 8px; }
.win h2 { margin-right: 26px; }
.win > .toolbar { height: 62px; }
.win > .pager { margin-bottom: 8px; }
.win .filters { padding-bottom: 13px; }
.win fieldset { padding-bottom: 14px; }
.win-body { height: 499px; }
.lessons th:last-child { border-right: 0; }
.lessons td, .lessons th { padding-left: 16px; }
.lessons .n { padding-left: 16px; background: #eee; }
.lessons .mid { padding: 9px 0 0; }
.lessons .mid .sq { height: 28px; }
.last td { border-bottom-color: #d2f0d2; }
.lessons .group td { height: 57px; padding-left: 10px; line-height: 52px; border-bottom: 5px solid #35b9f6; color: #606060; }
.fold { width: 28px; height: 28px; margin-right: 12px; line-height: 24px; background: #dfe3e8; color: #808890; vertical-align: 1px; }
.dash { display: inline-block; width: 26px; height: 10px; background: #0f0; vertical-align: 4px; }
.blue { color: #00f; }
.lessons .edit { padding: 4px 0 0; }
.edit input { display: block; width: 100%; height: 47px; padding: 0 6px; border: 2px solid #49b5e8; outline: 0; }

/* callouts */
.marks { position: absolute; left: 0; top: 0; pointer-events: none; z-index: 5; }
.frames { fill: none; stroke: #ff5a4b; stroke-width: 10; filter: drop-shadow(4px 8px 5px rgba(0, 0, 0, .85)); }
.arrows { fill: #ff5a4b; filter: drop-shadow(6px 8px 5px rgba(0, 0, 0, .85)); }
```
